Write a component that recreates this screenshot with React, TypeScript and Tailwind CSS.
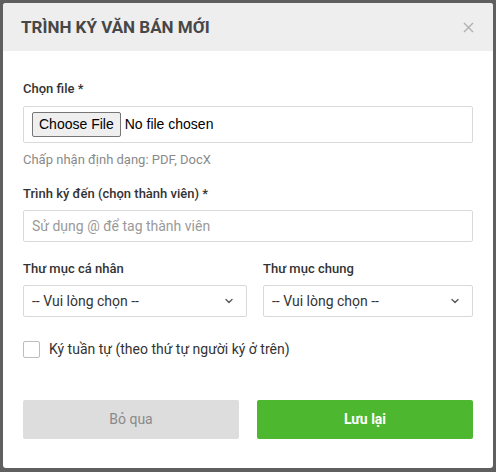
import React from "react";

function Chevron() {
  return (
    <svg width="10" height="10" viewBox="0 0 10 10" fill="none">
      <path d="M2 3.5 L5 6.5 L8 3.5" stroke="#555" strokeWidth="1.3" strokeLinecap="round" strokeLinejoin="round" />
    </svg>
  );
}

function Select() {
  return (
    <div className="flex h-[32px] items-center justify-between rounded-[2px] border border-[#d9d9d9] bg-white pl-[8px] pr-[12px]">
      <span className="text-[14px] text-[#333]">-- Vui lòng chọn --</span>
      <Chevron />
    </div>
  );
}

export default function App() {
  return (
    <div className="min-h-[472px] w-[496px] bg-[#5f5f5f] p-[3px]" style={{ fontFamily: "Roboto, 'Noto Sans', sans-serif" }}>
      <div className="h-[465px] w-[490px] overflow-hidden rounded-[3px] bg-white">
        <div className="flex h-[48px] items-center justify-between bg-[#eeeeee] pl-[18px] pr-[19px]">
          <h1 className="text-[17px] font-bold leading-none text-[#474747]">TRÌNH KÝ VĂN BÁN MỚI</h1>
          <svg width="11" height="11" viewBox="0 0 11 11">
            <path d="M1 1 L10 10 M10 1 L1 10" stroke="#b0b0b0" strokeWidth="1.4" />
          </svg>
        </div>
        <div className="px-[20px] pt-[29px]">
          <div className="text-[13px] font-medium leading-[18px] text-[#333]">Chọn file *</div>
          <div className="mt-[8px] flex h-[37px] items-center rounded-[2px] border border-[#d9d9d9] px-[8px]">
            <input type="file" className="text-[14px] text-black file:mr-[4px] file:cursor-default file:rounded-[2px] file:border file:border-solid file:border-[#767676] file:bg-[#efefef] file:px-[6px] file:py-[1px]" style={{ fontFamily: "'Liberation Sans', Arial, sans-serif" }} />
          </div>
          <div className="mt-[8px] text-[13px] leading-[18px] text-[#8a8a8a]">Chấp nhận định dạng: PDF, DocX</div>
          <div className="mt-[16px] text-[13px] font-medium leading-[18px] text-[#333]">Trình ký đến (chọn thành viên) *</div>
          <input
            className="mt-[7px] h-[32px] w-full rounded-[2px] border border-[#d9d9d9] px-[8px] text-[14px] text-[#333] outline-none placeholder:text-[#9a9a9a]"
            placeholder="Sử dụng @ để tag thành viên"
          />
          <div className="mt-[18px] grid grid-cols-[224px_210px] gap-[16px]">
            <div>
              <div className="text-[13px] font-medium leading-[18px] text-[#333]">Thư mục cá nhân</div>
              <div className="mt-[7px]"><Select /></div>
            </div>
            <div>
              <div className="text-[13px] font-medium leading-[18px] text-[#333]">Thư mục chung</div>
              <div className="mt-[7px]"><Select /></div>
            </div>
          </div>
          <label className="mt-[22px] flex items-center gap-[9px]">
            <span className="h-[17px] w-[17px] rounded-[2px] border border-[#bdbdbd] bg-white" />
            <span className="text-[14px] leading-[20px] text-[#333]">Ký tuần tự (theo thứ tự người ký ở trên)</span>
          </label>
          <div className="mt-[41px] grid grid-cols-[216px_216px] gap-[18px]">
            <button className="h-[39px] rounded-[2px] bg-[#dddddd] text-[14px] text-[#8a8a8a]">Bỏ qua</button>
            <button className="h-[39px] rounded-[2px] bg-[#4cb72f] text-[14px] font-bold text-white">Lưu lại</button>
          </div>
        </div>
      </div>
    </div>
  );
}
